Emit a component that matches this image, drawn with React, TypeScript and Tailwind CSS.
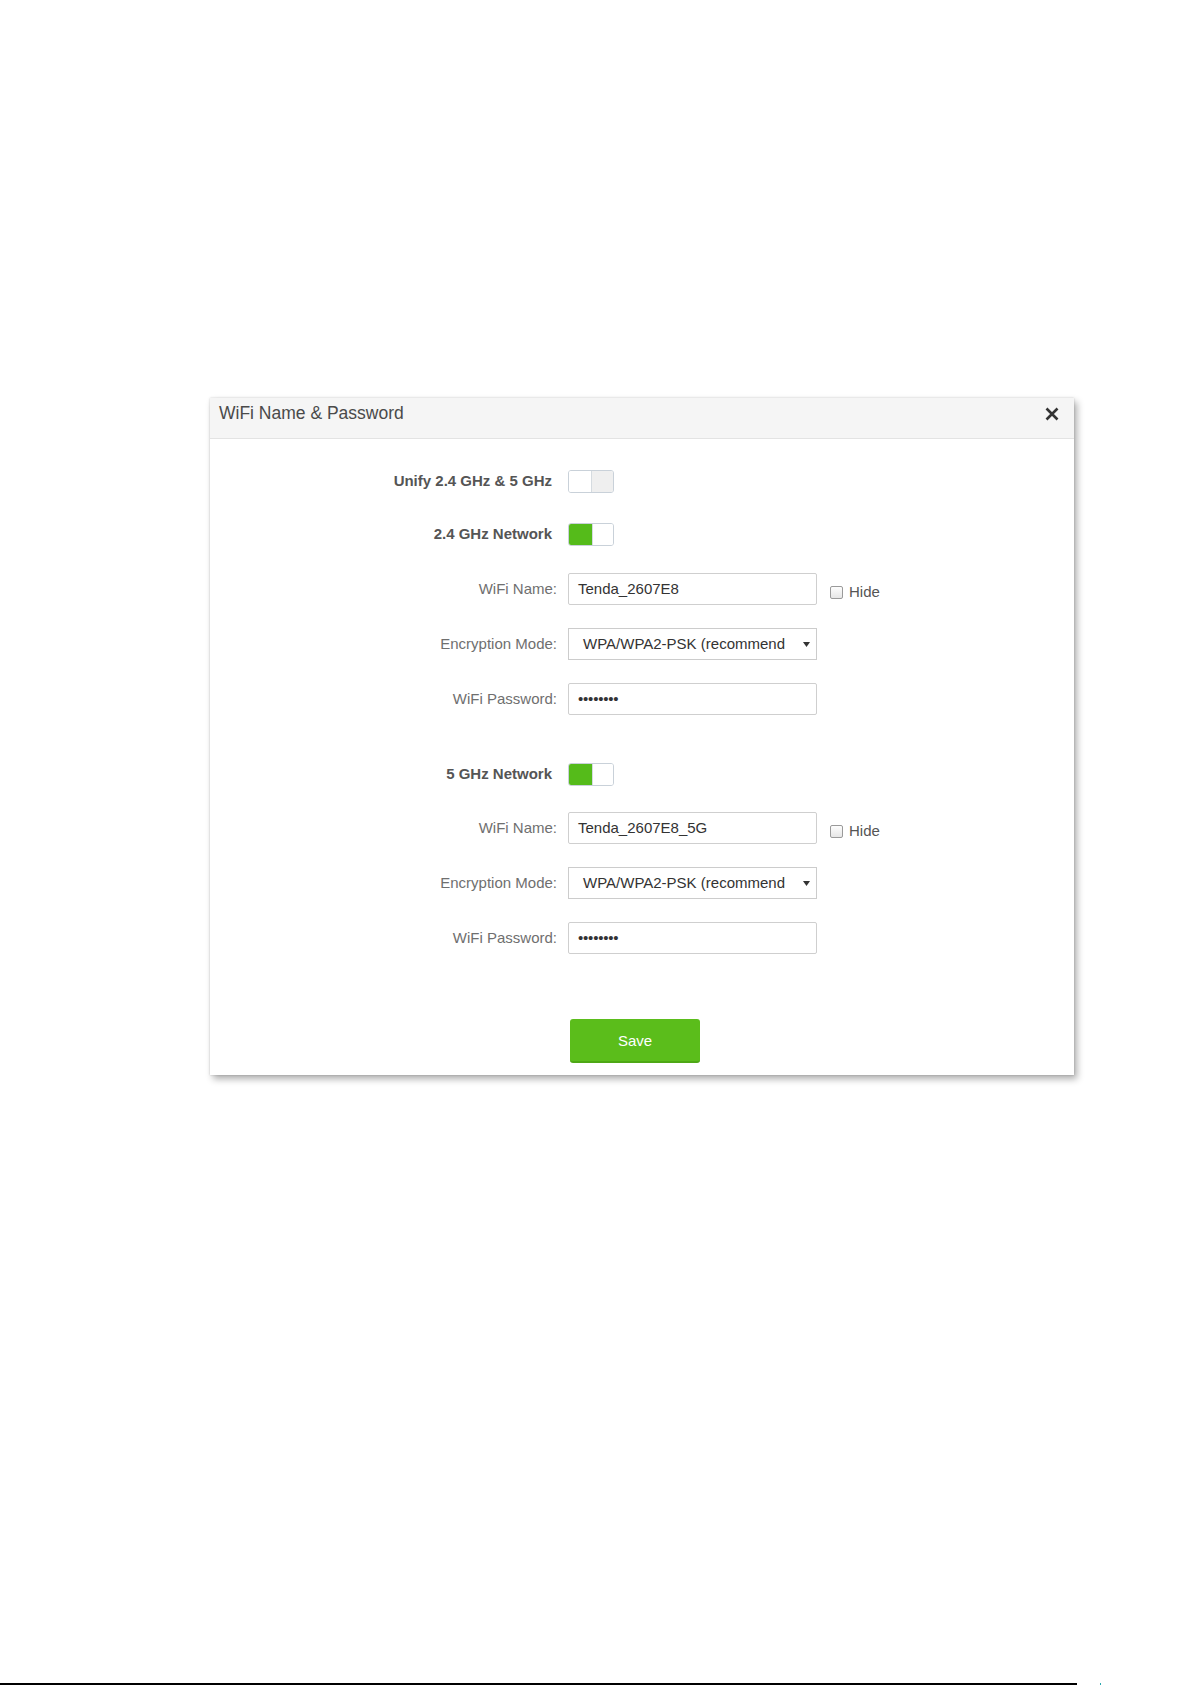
import React from "react";

type ToggleProps = { on: boolean };

function Toggle({ on }: ToggleProps) {
  return (
    <div className="flex h-[23px] w-[46px] overflow-hidden rounded-[3px] border border-[#c9d1d9] bg-white">
      {on ? (
        <>
          <div className="h-full w-[23px] bg-[#55bb1a]" />
          <div className="h-full flex-1 border-l border-[#d5dbe0] bg-white" />
        </>
      ) : (
        <>
          <div className="h-full w-[23px] border-r border-[#d5dbe0] bg-white" />
          <div className="h-full flex-1 bg-[#efefef]" />
        </>
      )}
    </div>
  );
}

function Label({ text, bold }: { text: string; bold?: boolean }) {
  return (
    <div
      className={
        bold
          ? "w-[347px] shrink-0 pr-[5px] text-right text-[15px] font-bold text-[#555555]"
          : "w-[347px] shrink-0 text-right text-[15px] text-[#6f6f6f]"
      }
    >
      {text}
    </div>
  );
}

function ToggleRow({ label, on, className }: { label: string; on: boolean; className: string }) {
  return (
    <div className={"flex h-[23px] items-center " + className}>
      <Label text={label} bold />
      <div className="ml-[11px]">
        <Toggle on={on} />
      </div>
    </div>
  );
}

function TextField({ value }: { value: string }) {
  return (
    <div className="flex h-[32px] w-[249px] items-center rounded-[2px] border border-[#cfcfcf] bg-white pl-[9px] text-[15px] text-[#333333]">
      {value}
    </div>
  );
}

function HideBox() {
  return (
    <div className="ml-[13px] mt-[6px] flex items-center">
      <div className="h-[13px] w-[13px] rounded-[2px] border border-[#9a9a9a] bg-gradient-to-b from-[#fdfdfd] to-[#e6e6e6]" />
      <span className="ml-[6px] text-[15px] text-[#555555]">Hide</span>
    </div>
  );
}

function NetworkFields({ name, first }: { name: string; first: string }) {
  return (
    <>
      <div className={"flex h-[32px] items-center " + first}>
        <Label text="WiFi Name:" />
        <div className="ml-[11px]">
          <TextField value={name} />
        </div>
        <HideBox />
      </div>
      <div className="mt-[23px] flex h-[32px] items-center">
        <Label text="Encryption Mode:" />
        <div className="ml-[11px] flex h-[32px] w-[249px] items-center justify-between border border-[#cccccc] bg-white pl-[14px] pr-[6px] text-[15px] text-[#333333]">
          <span className="whitespace-nowrap">WPA/WPA2-PSK (recommend</span>
          <svg width="7" height="5" viewBox="0 0 7 5">
            <path d="M0 0H7L3.5 5Z" fill="#333333" />
          </svg>
        </div>
      </div>
      <div className="mt-[23px] flex h-[32px] items-center">
        <Label text="WiFi Password:" />
        <div className="ml-[11px] flex h-[32px] w-[249px] items-center rounded-[2px] border border-[#cfcfcf] bg-white pl-[9px] text-[15px] tracking-[-0.2px] text-[#333333]">
          ••••••••
        </div>
      </div>
    </>
  );
}

export default function App() {
  return (
    <div className="flex h-[1685px] w-[1192px] flex-col bg-white pt-[398px] font-['Liberation_Sans',Arial,sans-serif]">
      <div className="ml-[210px] w-[864px] bg-white shadow-[3px_4px_7px_rgba(0,0,0,0.32),0_0_2px_rgba(0,0,0,0.18)]">
        {/* dialog header */}
        <div className="flex h-[41px] items-start justify-between border-b border-[#e3e3e3] bg-[#f5f5f5]">
          <div className="ml-[9px] pt-[5px] text-[17.5px] leading-[20px] text-[#4a4a4a]">WiFi Name &amp; Password</div>
          <svg width="14" height="14" viewBox="0 0 14 14" className="mr-[15px] mt-[9px]">
            <path d="M1.5 1.5L12.5 12.5M12.5 1.5L1.5 12.5" stroke="#333333" strokeWidth="2.6" strokeLinecap="butt" />
          </svg>
        </div>

        {/* dialog body */}
        <div className="flex flex-col pb-[12px]">
          <ToggleRow label="Unify 2.4 GHz & 5 GHz" on={false} className="mt-[31px]" />
          <ToggleRow label="2.4 GHz Network" on={true} className="mt-[30px]" />
          <NetworkFields name="Tenda_2607E8" first="mt-[27px]" />
          <ToggleRow label="5 GHz Network" on={true} className="mt-[48px]" />
          <NetworkFields name="Tenda_2607E8_5G" first="mt-[26px]" />
          <div className="mt-[65px] flex">
            <div className="w-[347px] shrink-0" />
            <button className="ml-[13px] flex h-[44px] w-[130px] items-center justify-center rounded-[3px] border-b-2 border-[#4ea815] bg-[#5bbd1b] pt-[2px] text-[15px] text-white">
              Save
            </button>
          </div>
        </div>
      </div>

      {/* page rule at the foot */}
      <div className="mt-auto flex h-[2px] items-end">
        <div className="h-[2px] w-[1077px] bg-black" />
        <div className="ml-[23px] h-[2px] w-[1px] bg-[#2aa8b0]" />
      </div>
    </div>
  );
}
